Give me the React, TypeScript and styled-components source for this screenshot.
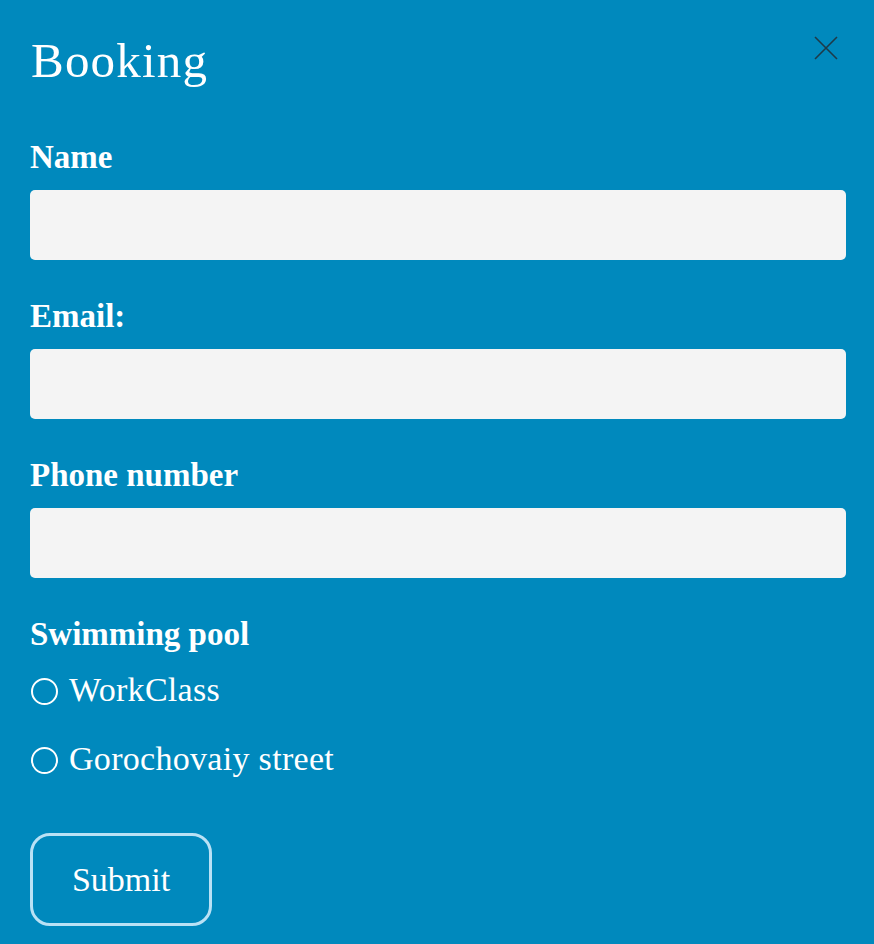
import React from 'react';
import styled, { createGlobalStyle } from 'styled-components';

const GlobalStyle = createGlobalStyle`
  html, body {
    margin: 0;
    padding: 0;
    background: #0089bd;
  }
  body {
    font-family: "Liberation Serif", "Times New Roman", serif;
    color: #ffffff;
  }
`;

// ----- layout -----
const Modal = styled.div`
  position: relative;
  box-sizing: border-box;
  width: 874px;
  min-height: 944px;
  padding: 32px 28px 0 30px;
  background: #0089bd;
`;

const Title = styled.h1`
  margin: 0 0 0 1px;
  font-size: 49px;
  line-height: 58px;
  font-weight: 400;
  letter-spacing: 1.2px;
`;

const CloseButton = styled.button`
  position: absolute;
  top: 36px;
  right: 36px;
  width: 24px;
  height: 24px;
  padding: 0;
  border: none;
  background: transparent;
  cursor: pointer;
`;

const Form = styled.form`
  display: flex;
  flex-direction: column;
  margin-top: 47px;
`;

const Field = styled.div`
  display: flex;
  flex-direction: column;
  gap: 13px;
  margin-bottom: 36px;
`;

const Label = styled.label`
  font-size: 33px;
  line-height: 40px;
  font-weight: 700;
`;

const Input = styled.input`
  box-sizing: border-box;
  width: 100%;
  height: 70px;
  border: none;
  border-radius: 5px;
  background: #f4f4f4;
  padding: 0 16px;
  font-family: inherit;
  font-size: 24px;
  outline: none;
`;

const Options = styled.div`
  display: flex;
  flex-direction: column;
  gap: 29px;
  margin-top: 16px;
`;

const Option = styled.label`
  display: flex;
  align-items: center;
  gap: 11px;
  font-size: 34px;
  line-height: 40px;
  letter-spacing: 0.3px;
  cursor: pointer;
`;

const Radio = styled.input`
  appearance: none;
  box-sizing: border-box;
  width: 27px;
  height: 27px;
  margin: 3px 0 0 1px;
  border: 2px solid #ffffff;
  border-radius: 50%;
  background: transparent;
  flex-shrink: 0;
`;

const SubmitButton = styled.button`
  align-self: flex-start;
  box-sizing: border-box;
  width: 182px;
  height: 93px;
  margin-top: 54px;
  border: 3px solid #b9e1f5;
  border-radius: 20px;
  background: transparent;
  color: #ffffff;
  font-family: inherit;
  font-size: 34px;
  cursor: pointer;
`;

const fields = [
  { id: 'name', label: 'Name', type: 'text' },
  { id: 'email', label: 'Email:', type: 'email' },
  { id: 'phone', label: 'Phone number', type: 'tel' },
];

const pools = ['WorkClass', 'Gorochovaiy street'];

const App: React.FC = () => {
  return (
    <>
      <GlobalStyle />
      <Modal>
        <Title>Booking</Title>
        <CloseButton type="button" aria-label="Close">
          <svg width="24" height="24" viewBox="0 0 24 24">
            <path d="M1 1 L23 23 M23 1 L1 23" stroke="#1e3a48" strokeWidth="1.6" fill="none" />
          </svg>
        </CloseButton>

        <Form onSubmit={(e) => e.preventDefault()}>
          {fields.map((f) => (
            <Field key={f.id}>
              <Label htmlFor={f.id}>{f.label}</Label>
              <Input id={f.id} type={f.type} />
            </Field>
          ))}

          <Label as="div">Swimming pool</Label>
          <Options>
            {pools.map((p) => (
              <Option key={p}>
                <Radio type="radio" name="pool" value={p} />
                {p}
              </Option>
            ))}
          </Options>

          <SubmitButton type="submit">Submit</SubmitButton>
        </Form>
      </Modal>
    </>
  );
};

export default App;
